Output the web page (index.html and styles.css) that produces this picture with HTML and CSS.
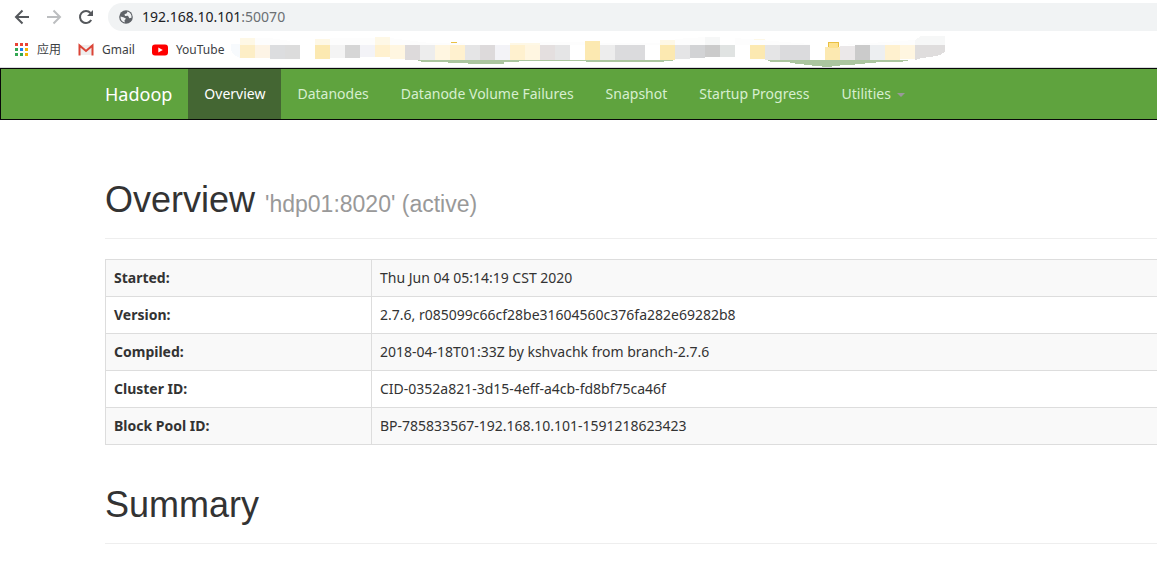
FILE: index.html
```html
<!DOCTYPE html>
<html lang="en">
<head>
<meta charset="utf-8">
<title>Namenode information</title>
<link rel="stylesheet" href="styles.css">
</head>
<body>
<header class="browser">
  <div class="toolbar">
    <button class="tool" type="button" aria-label="Back"><svg width="16" height="16" viewBox="0 0 16 16" fill="none" stroke="#55585c" stroke-width="2"><path d="M15 8H2.5M8.5 1.5 2 8l6.500 6.500"/></svg></button>
    <button class="tool" type="button" aria-label="Forward"><svg width="16" height="16" viewBox="0 0 16 16" fill="none" stroke="#bcbec0" stroke-width="2"><path d="M1 8h12.500M7.500 1.500 14 8l-6.500 6.500"/></svg></button>
    <button class="tool" type="button" aria-label="Reload"><svg width="16" height="16" viewBox="0 0 16 16"><path d="M13.200 11A6 6 0 1 1 12.500 4" fill="none" stroke="#55585c" stroke-width="2"/><path d="M15 1v6H9z" fill="#55585c"/></svg></button>
    <div class="address">
      <svg width="14" height="14" viewBox="0 0 14 14"><circle cx="7" cy="7" r="6.800" fill="#5f6368"/><path d="M1.500 6.500 5 7.500l2 1.300-1.500 1.400.3 2.400C3 12 1.300 9.800 1.500 6.500zM8.500 1.500 7.800 3.300 5.500 4.300 6 6l3-.2 1.300 2.500 2.200-.5C13 5 11.500 2.300 8.500 1.500z" fill="#f1f3f4"/></svg>
      <span class="url"><span class="host">192.168.10.101</span>:50070</span>
    </div>
  </div>
  <nav class="bookmarks" aria-label="Bookmarks">
    <a class="bookmark" href="#"><svg width="14" height="14" viewBox="0 0 14 14"><path fill="#ea4335" d="M0 0h3v3H0zM5 0h3v3H5zM10 0h3v3h-3z"/><path fill="#34a853" d="M0 5h3v3H0zM0 10h3v3H0zM5 10h3v3H5z"/><path fill="#1a82f0" d="M5 5h3v3H5z"/><path fill="#f4b400" d="M10 5h3v3h-3zM10 10h3v3h-3z"/></svg>应用</a>
    <a class="bookmark" href="#"><svg width="16" height="14" viewBox="0 0 16 14"><path d="M2 2h12v10H2z" fill="#efeded"/><path d="M1.500 12.500v-10L8 8l6.500-5.500v10" fill="none" stroke="#db4437" stroke-width="2"/></svg>Gmail</a>
    <a class="bookmark" href="#"><svg width="16" height="14" viewBox="0 0 16 14"><rect y="1.500" width="16" height="11" rx="3" fill="#f00"/><path d="m6.300 4.500 4.500 2.500-4.500 2.500z" fill="#fff"/></svg>YouTube</a>
    <svg class="mosaic" width="720" height="36" viewBox="228 31 720 36" shape-rendering="crispEdges" aria-hidden="true">
      <path fill="#abc69f" d="M418 60h104v1h-3v1h-15v2h-36v-1h-20v-1h-27v-1h-3zM522 60h151v1h-9v1h-78v-1h-64zM768 60h140v1h-5v1h-27v1h-11v1h-10v1h-15v1h-8v1h-10v-1h-10v-1h-8v-1h-9v-1h-5v-1h-20v-1h-2z"/>
      <path fill="#f7fafd" d="M240 44h-9v6l3 5 6 3z"/>
      <path fill="#fef8e6" d="M240 38h15v7h-15zM315 39h15v6h-15zM375 37h15v8h-15zM510 43h30v2h-30zM660 40h15v5h-15zM750 39h15v6h-15z"/>
      <path fill="#fdfdfd" d="M255 38h15l20 3v4h-35zM330 38h45v7h-45zM390 38l40 5h35v2h-75zM540 42h45v3h-45zM600 43h60v2h-60zM675 39l30-2v8h-30zM735 38l75 6v1h-75zM840 45l75-5v5z"/>
      <path fill="#f6f7f7" d="M705 37h15v8h-15zM915 40l6-4h24v9h-30z"/>
      <path fill="#fdeec6" d="M240 45h15v13h-15z"/><path fill="#fdf4e6" d="M255 45h15v13h-15z"/><path fill="#dcdddf" d="M270 45h15v14h-15z"/><path fill="#dcdcdc" d="M285 45h15v14h-15z"/>
      <path fill="#fce9b1" d="M315 45h15v14h-15zM585 41h15v19h-15zM660 45h15v15h-15zM750 45h15v14h-15zM825 47h15v13h-15z"/>
      <path fill="#f4f4f4" d="M330 45h15v13h-15z"/><path fill="#d6d6d6" d="M345 45h15v13h-15z"/><path fill="#f3f3f7" d="M360 45h15v12h-15zM495 45h15v15h-15z"/>
      <path fill="#fff1cf" d="M375 45h15v12h-15zM450 45h15v15h-15zM510 45h15v15h-15zM885 45h15v15h-15z"/>
      <path fill="#fff6e1" d="M390 45h15v14h-15zM435 45h15v15h-15zM525 45h15v15h-15zM900 45h15v14h-15z"/>
      <path fill="#dddadb" d="M405 45h15v15h-15zM480 45h15v15h-15z"/><path fill="#ededed" d="M420 45h15v15h-15zM600 45h15v15h-15z"/>
      <path fill="#e5e5e6" d="M465 45h15v15h-15zM555 45h15v15h-15zM675 45h15v14h-15zM765 45h15v15h-15z"/><path fill="#e4dfdf" d="M540 45h15v15h-15z"/>
      <path fill="#dbdbdd" d="M615 45h30v15h-30zM780 45h30v15h-30z"/><path fill="#d2d3d5" d="M690 45h15v13h-15z"/><path fill="#cbcbcb" d="M705 45h15v12h-15zM855 45h15v15h-15z"/><path fill="#e0e3e2" d="M720 45h15v12h-15z"/>
      <path fill="#ebe8e9" d="M840 46h15v14h-15z"/><path fill="#edeff1" d="M870 45h15v15h-15z"/><path fill="#dfdddd" d="M915 45h30v7l-5 3-10 2-8 1-7 2z"/>
      <path fill="#e9c042" d="M451 42h6v1h-6zM828 42h11v5h-11z"/><path fill="#fde28f" d="M829 43h9v5h-9z"/>
    </svg>
  </nav>
</header>
<nav class="navbar" aria-label="Main">
  <a class="brand" href="#">Hadoop</a>
  <a class="nav-link active" href="#">Overview</a>
  <a class="nav-link" href="#">Datanodes</a>
  <a class="nav-link" href="#">Datanode Volume Failures</a>
  <a class="nav-link" href="#">Snapshot</a>
  <a class="nav-link" href="#">Startup Progress</a>
  <a class="nav-link" href="#">Utilities <span class="caret"></span></a>
</nav>
<main class="content">
  <h1 class="page-header">Overview <small class="subtitle">'hdp01:8020' (active)</small></h1>
  <table class="info">
    <tbody>
      <tr><th scope="row">Started:</th><td>Thu Jun 04 05:14:19 CST 2020</td></tr>
      <tr><th scope="row">Version:</th><td>2.7.6, r085099c66cf28be31604560c376fa282e69282b8</td></tr>
      <tr><th scope="row">Compiled:</th><td>2018-04-18T01:33Z by kshvachk from branch-2.7.6</td></tr>
      <tr><th scope="row">Cluster ID:</th><td>CID-0352a821-3d15-4eff-a4cb-fd8bf75ca46f</td></tr>
      <tr><th scope="row">Block Pool ID:</th><td>BP-785833567-192.168.10.101-1591218623423</td></tr>
    </tbody>
  </table>
  <h1 class="page-header">Summary</h1>
</main>
</body>
</html>
```
FILE: styles.css
```css
* { box-sizing: border-box; }

body {
  margin: 0;
  background: #fff;
  color: #333;
  font: 14px/20px "Noto Sans", "Noto Sans CJK SC", sans-serif;
}

a { color: inherit; text-decoration: none; }

.browser { border-bottom: 1px solid #d9dade; }

.toolbar {
  display: flex;
  align-items: center;
  gap: 16px;
  padding: 3px 0 0 14px;
}

.tool {
  display: flex;
  padding: 0;
  border: 0;
  background: none;
}

.address {
  display: flex;
  flex: 1;
  align-items: center;
  gap: 9px;
  height: 28px;
  margin-left: -2px;
  padding-left: 11px;
  border-radius: 14px 0 0 14px;
  background: #f1f3f4;
}

.url { color: #6b6f73; }
.host { color: #202124; }

.bookmarks {
  display: flex;
  align-items: center;
  gap: 17px;
  height: 36px;
  padding-left: 15px;
  overflow: hidden;
  color: #3c4043;
  font-size: 12px;
}

.bookmark {
  display: flex;
  flex: none;
  align-items: center;
  gap: 8px;
  padding-top: 2px;
}

.mosaic { flex: none; margin-left: -13px; }

.navbar {
  display: flex;
  padding-left: 88px;
  border: 1px solid #080808;
  border-right: 0;
  background: #5fa33e;
  color: #d7efd0;
  line-height: 20px;
  white-space: nowrap;
}

.brand, .nav-link { padding: 15px 16px; }
.brand { color: #fff; font-size: 18px; }
.active { background: #446633; color: #fff; }

.caret {
  display: inline-block;
  margin-left: 2px;
  border: 4px solid transparent;
  border-top-color: #999;
  border-bottom: 0;
  vertical-align: middle;
}

.content { padding: 60px 0 0 105px; }

.page-header {
  margin: 0 0 20px;
  padding-bottom: 18px;
  border-bottom: 1px solid #eee;
  font: 36px/40px "Liberation Sans", sans-serif;
}

.subtitle { color: #999; font-size: 23px; line-height: 1; }

.info {
  width: 100%;
  margin-bottom: 40px;
  border-collapse: collapse;
}

.info th, .info td {
  padding: 8px;
  border: 1px solid #ddd;
  text-align: left;
}

.info td { border-right: 0; }
.info th { width: 266px; }
.info tr:nth-child(odd) { background: #f9f9f9; }
```
